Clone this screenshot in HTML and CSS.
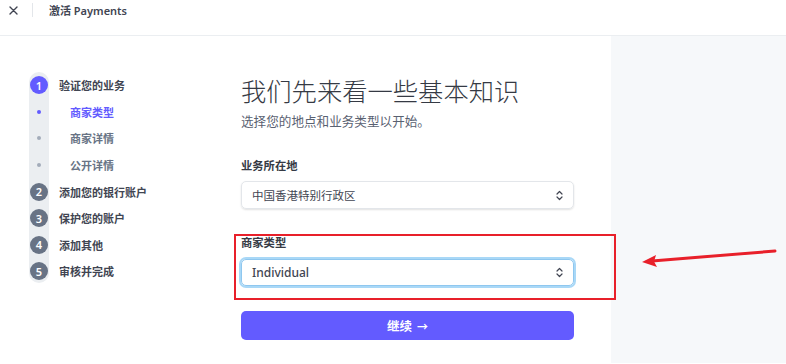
FILE: index.html
```html
<!DOCTYPE html>
<html lang="zh-CN">
<head>
    <meta charset="UTF-8">
    <meta name="viewport" content="width=device-width, initial-scale=1.0">
    <title>激活 Payments</title>
    <link rel="stylesheet" href="styles.css">
</head>
<body>
    <div class="topbar">
        <span class="close">
            <svg width="9" height="9" viewBox="0 0 9 9"><path d="M1 1 L8 8 M8 1 L1 8" stroke="#414552" stroke-width="1.4" stroke-linecap="round"/></svg>
        </span>
        <span class="divider"></span>
        <span class="topbar-title">激活 Payments</span>
    </div>

    <div class="layout">
        <div class="sidebar">
            <ul class="steps">
                <li class="step"><span class="num active">1</span><span class="step-label">验证您的业务</span></li>
                <li class="step sub"><span class="dot active"></span><span class="sub-label active">商家类型</span></li>
                <li class="step sub"><span class="dot"></span><span class="sub-label">商家详情</span></li>
                <li class="step sub"><span class="dot"></span><span class="sub-label">公开详情</span></li>
                <li class="step"><span class="num">2</span><span class="step-label">添加您的银行账户</span></li>
                <li class="step"><span class="num">3</span><span class="step-label">保护您的账户</span></li>
                <li class="step"><span class="num">4</span><span class="step-label">添加其他</span></li>
                <li class="step"><span class="num">5</span><span class="step-label">审核并完成</span></li>
            </ul>
        </div>

        <div class="main">
            <h1 class="title">我们先来看一些基本知识</h1>
            <p class="subtitle">选择您的地点和业务类型以开始。</p>

            <label class="field-label first">业务所在地</label>
            <div class="select">
                <span>中国香港特别行政区</span>
                <svg class="chev" width="7" height="11" viewBox="0 0 7 11"><path d="M1 4 L3.5 1.5 L6 4 M1 7 L3.5 9.5 L6 7" fill="none" stroke="#414552" stroke-width="1.2" stroke-linecap="round" stroke-linejoin="round"/></svg>
            </div>

            <label class="field-label">商家类型</label>
            <div class="select focused">
                <span class="value">Individual</span>
                <svg class="chev" width="7" height="11" viewBox="0 0 7 11"><path d="M1 4 L3.5 1.5 L6 4 M1 7 L3.5 9.5 L6 7" fill="none" stroke="#414552" stroke-width="1.2" stroke-linecap="round" stroke-linejoin="round"/></svg>
            </div>

            <button type="button" class="continue">继续 <span class="arrow">→</span></button>
        </div>

        <div class="aside"></div>
    </div>

    <!-- annotation drawn over the screenshot -->
    <div class="mark-box"></div>
    <svg class="mark-arrow" width="150" height="30" viewBox="0 0 150 30">
        <path d="M137 4 L14 14" stroke="#e8202a" stroke-width="3" stroke-linecap="round" fill="none"/>
        <path d="M4 15 L18 8 L16 14.5 L19 20 Z" fill="#e8202a"/>
    </svg>
</body>
</html>
```

FILE: styles.css
```css
/* Base */
body {
    margin: 0;
    font-family: "Noto Sans", "Noto Sans CJK SC", sans-serif;
    color: #353a44;
    background: #fff;
    overflow: hidden;
}

/* Top bar */
.topbar {
    height: 36px;
    border-bottom: 1px solid #ebeef1;
    display: flex;
    align-items: flex-start;
    box-sizing: border-box;
    padding: 3px 0 0 9px;
}

.close {
    display: flex;
    width: 10px;
    height: 15px;
    align-items: center;
}

.divider {
    width: 1px;
    height: 14px;
    background: #e3e6ea;
    margin: 0 16px 0 13px;
}

.topbar-title {
    font-size: 11px;
    line-height: 15px;
    font-weight: 600;
    color: #414552;
}

/* Layout */
.layout {
    display: flex;
    height: 327px;
}

.sidebar {
    width: 241px;
    box-sizing: border-box;
    padding: 36px 0 0 29px;
}

.main {
    width: 370px;
    box-sizing: border-box;
    padding: 40px 0 0 0;
}

.aside {
    flex: 1;
    background: #f6f8fa;
}

/* Steps */
.steps {
    list-style: none;
    margin: 0;
    padding: 0;
    position: relative;
}

.steps::before {
    content: "";
    position: absolute;
    left: 0;
    top: 0;
    width: 20px;
    height: 211px;
    border-radius: 10px;
    background: #ebeef1;
}

.step {
    position: relative;
    display: flex;
    align-items: center;
    height: 26.6px;
}

.num {
    width: 18px;
    height: 18px;
    margin-left: 1px;
    border-radius: 50%;
    background: #687385;
    color: #fff;
    font-size: 11px;
    font-weight: 600;
    display: flex;
    align-items: center;
    justify-content: center;
}

.num.active {
    background: #635bff;
}

.step-label {
    margin-left: 11px;
    font-size: 11px;
    font-weight: 600;
    color: #414552;
}

.dot {
    width: 4px;
    height: 4px;
    margin-left: 8px;
    border-radius: 50%;
    background: #a3acba;
}

.dot.active {
    background: #635bff;
}

.sub-label {
    margin-left: 29px;
    font-size: 11px;
    font-weight: 600;
    color: #687385;
}

.sub-label.active {
    color: #635bff;
}

/* Form */
.title {
    margin: 0;
    font-size: 25.3px;
    line-height: 30px;
    font-weight: 300;
    color: #353a44;
}

.subtitle {
    margin: 7px 0 0;
    font-size: 12.6px;
    line-height: 18px;
    color: #596171;
}

.field-label {
    display: block;
    margin-top: 26px;
    font-size: 11.3px;
    line-height: 16px;
    font-weight: 700;
    color: #353a44;
}

.field-label.first {
    margin-top: 27px;
}

.select {
    margin-top: 7px;
    width: 333px;
    height: 28px;
    box-sizing: border-box;
    border: 1px solid #e3e6ea;
    border-radius: 5px;
    box-shadow: 0 1px 2px rgba(0, 0, 0, 0.12);
    display: flex;
    align-items: center;
    justify-content: space-between;
    padding: 0 10px 0 10px;
    font-size: 11.5px;
    color: #414552;
}

.select.focused {
    height: 27px;
    margin-top: 8px;
    border-color: #8fc7ef;
    box-shadow: 0 0 0 2px #a9d8f7;
}

.select .value {
    font-weight: 500;
    font-size: 12px;
}

.chev {
    display: block;
}

.continue {
    display: flex;
    align-items: center;
    justify-content: center;
    gap: 5px;
    margin-top: 25px;
    width: 333px;
    height: 29px;
    border: none;
    border-radius: 5px;
    background: #635bff;
    color: #fff;
    font-family: inherit;
    font-size: 12.5px;
    font-weight: 700;
    cursor: pointer;
}

.arrow {
    font-size: 11px;
    font-weight: 600;
}

/* Annotation */
.mark-box {
    position: absolute;
    left: 234px;
    top: 234px;
    width: 382px;
    height: 66px;
    box-sizing: border-box;
    border: 2px solid #e8202a;
}

.mark-arrow {
    position: absolute;
    left: 638px;
    top: 247px;
}
```
